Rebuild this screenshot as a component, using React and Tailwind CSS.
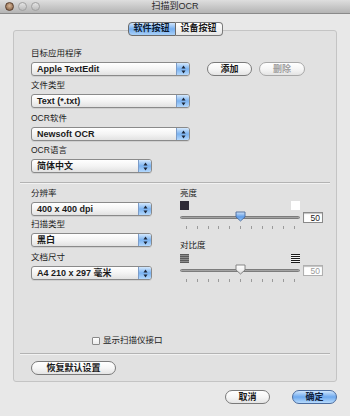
import React from 'react';

const font = "font-['Liberation_Sans','Noto_Sans_CJK_SC',sans-serif]";

function Arrows() {
  return (
    <svg width="5" height="9" viewBox="0 0 5 9">
      <path d="M2.5 0.5 L4.5 3.5 H0.5 Z" fill="#1c2536" />
      <path d="M2.5 8.5 L4.5 5.5 H0.5 Z" fill="#1c2536" />
    </svg>
  );
}

function Popup({ value, width }) {
  return (
    <div className={`flex h-[14px] ${width} rounded-[3px] border border-[#8a8a8a] bg-gradient-to-b from-white via-[#f4f4f4] to-[#e2e2e2] shadow-[0_1px_0_rgba(0,0,0,0.08)] overflow-hidden`}>
      <div className="flex-1 pl-[5px] text-[9px] font-bold leading-[12px] text-[#1a1a1a] whitespace-nowrap">{value}</div>
      <div className="w-[13px] flex items-center justify-center border-l border-[#7c9cc8] bg-gradient-to-b from-[#d4e8fc] via-[#7ab2f0] to-[#b4d8fc]">
        <Arrows />
      </div>
    </div>
  );
}

function Pill({ label, width, blue, disabled }) {
  const skin = blue
    ? 'border-[#4b6c9e] bg-gradient-to-b from-[#d0e6fc] via-[#6ea9ee] to-[#b6dafc] text-[#10203a]'
    : 'border-[#7a7a7a] bg-gradient-to-b from-white via-[#f6f6f6] to-[#e4e4e4]';
  return (
    <div className={`flex h-[14px] ${width} items-center justify-center rounded-full border ${skin} text-[9px] font-bold leading-none ${disabled ? 'text-[#a0a0a0] border-[#a8a8a8]' : 'text-[#1a1a1a]'}`}>
      {label}
    </div>
  );
}

function Label({ children, className = '' }) {
  return <div className={`h-[12px] text-[8.5px] leading-[12px] text-[#1a1a1a] ${className}`}>{children}</div>;
}

function Thumb({ blue }) {
  return (
    <svg width="11" height="11" viewBox="0 0 11 11">
      <defs>
        <linearGradient id={blue ? 'tb' : 'tw'} x1="0" y1="0" x2="0" y2="1">
          <stop offset="0" stopColor={blue ? '#cfe4fb' : '#ffffff'} />
          <stop offset="0.55" stopColor={blue ? '#5e9ce8' : '#f0f0f0'} />
          <stop offset="1" stopColor={blue ? '#9cc8f6' : '#d8d8d8'} />
        </linearGradient>
      </defs>
      <path d="M1 1 H10 V6 L5.5 10 L1 6 Z" fill={`url(#${blue ? 'tb' : 'tw'})`} stroke={blue ? '#4a6a9a' : '#7a7a7a'} strokeWidth="0.9" />
    </svg>
  );
}

function Slider({ blue, disabled }) {
  return (
    <div className="flex h-[12px] items-center">
      <div className="relative h-[12px] w-[120px]">
        <div className="absolute left-0 right-0 top-[5px] h-[3px] rounded-full bg-gradient-to-b from-[#8a8a8a] to-[#bdbdbd] border border-[#7c7c7c]" />
        <div className="absolute left-[55px] top-0">
          <Thumb blue={blue} />
        </div>
      </div>
      <div className={`ml-[3px] h-[11px] w-[20px] border bg-white pr-[2px] text-right text-[8.5px] leading-[10px] shadow-[inset_0_1px_1px_rgba(0,0,0,0.25)] ${disabled ? 'border-[#b0b0b0] text-[#9a9a9a]' : 'border-[#8a8a8a] text-[#1a1a1a]'}`}>
        50
      </div>
    </div>
  );
}

function Ticks() {
  return (
    <div className="mt-[3px] flex w-[120px] justify-between pl-[6px] pr-[5px]">
      {Array.from({ length: 11 }).map((_, i) => (
        <div key={i} className="h-[3px] w-px bg-[#9a9a9a]" />
      ))}
    </div>
  );
}

function Stripes({ strong }) {
  return (
    <svg width="9" height="9" viewBox="0 0 9 9">
      {[0, 2, 4, 6, 8].map((y) => (
        <rect key={y} x="0" y={y} width="9" height="1" fill={strong ? '#1a1a1a' : '#5a5a5a'} />
      ))}
      {[1, 3, 5, 7].map((y) => (
        <rect key={y} x="0" y={y} width="9" height="1" fill={strong ? '#f4f4f4' : '#8c8c8c'} />
      ))}
    </svg>
  );
}

function Separator() {
  return <div className="mx-[6px] h-[2px] border-t border-[#b3b3b3] border-b border-b-[#f2f2f2]" />;
}

export default function App() {
  return (
    <div className={`flex h-[416px] w-[350px] flex-col overflow-hidden bg-[#e8e8e8] ${font}`}>
      {/* title bar */}
      <div className="grid h-[14px] grid-cols-[1fr_auto_1fr] items-center border-b border-[#8a8a8a] bg-gradient-to-b from-[#dedede] to-[#b4b4b4]">
        <div className="flex items-center gap-[4px] pl-[5px]">
          <div className="h-[9px] w-[9px] rounded-full border border-[#5a4030] bg-[radial-gradient(circle_at_50%_40%,#d8b89a,#7a5438)]" />
          <div className="h-[9px] w-[9px] rounded-full border border-[#a0a0a0] bg-gradient-to-b from-[#e4e4e4] to-[#bcbcbc]" />
          <div className="h-[9px] w-[9px] rounded-full border border-[#a0a0a0] bg-gradient-to-b from-[#e4e4e4] to-[#bcbcbc]" />
        </div>
        <div className="text-[9px] leading-none text-[#2a2a2a]">扫描到OCR</div>
        <div />
      </div>

      {/* tabs */}
      <div className="relative z-10 mt-[8px] flex h-[14px] justify-center">
        <div className="flex h-[14px] w-[48px] items-center justify-center rounded-l-[4px] border border-[#6a6a6a] bg-gradient-to-b from-[#cfe4fb] via-[#74aef0] to-[#a9d0f8] text-[9px] font-bold text-[#0c1a30]">
          软件按钮
        </div>
        <div className="flex h-[14px] w-[47px] items-center justify-center rounded-r-[4px] border border-l-0 border-[#7a7a7a] bg-gradient-to-b from-white to-[#e6e6e6] text-[9px] font-bold text-[#1a1a1a]">
          设备按钮
        </div>
      </div>

      {/* group box */}
      <div className="mx-[13px] -mt-[6px] flex h-[352px] flex-col rounded-[3px] border border-[#c4c4c4] bg-[#e1e1e1]">
        <div className="pl-[17px] pt-[16px]">
          <Label>目标应用程序</Label>
          <div className="mt-[3px] flex items-center">
            <Popup value="Apple TextEdit" width="w-[159px]" />
            <div className="ml-[17px]"><Pill label="添加" width="w-[45px]" /></div>
            <div className="ml-[7px]"><Pill label="删除" width="w-[46px]" disabled /></div>
          </div>
          <Label className="mt-[3px]">文件类型</Label>
          <div className="mt-[3px]"><Popup value="Text (*.txt)" width="w-[159px]" /></div>
          <Label className="mt-[4px]">OCR软件</Label>
          <div className="mt-[3px]"><Popup value="Newsoft OCR" width="w-[159px]" /></div>
          <Label className="mt-[3px]">OCR语言</Label>
          <div className="mt-[3px]"><Popup value="简体中文" width="w-[121px]" /></div>
        </div>

        <div className="mt-[9px]"><Separator /></div>

        <div className="mt-[3px] flex pl-[17px]">
          <div className="w-[121px]">
            <Label>分辨率</Label>
            <div className="mt-[3px]"><Popup value="400 x 400 dpi" width="w-[121px]" /></div>
            <Label className="mt-[2px]">扫描类型</Label>
            <div className="mt-[3px]"><Popup value="黑白" width="w-[121px]" /></div>
            <Label className="mt-[4px]">文档尺寸</Label>
            <div className="mt-[3px]"><Popup value="A4 210 x 297 毫米" width="w-[121px]" /></div>
          </div>
          <div className="ml-[28px] w-[143px]">
            <Label>亮度</Label>
            <div className="mt-[2px] flex w-[120px] justify-between">
              <div className="h-[9px] w-[9px] bg-[#2e2a36]" />
              <div className="h-[9px] w-[9px] bg-white" />
            </div>
            <div className="mt-[1px]"><Slider blue /></div>
            <Ticks />
            <Label className="mt-[10px]">对比度</Label>
            <div className="mt-[3px] flex w-[120px] justify-between">
              <Stripes />
              <Stripes strong />
            </div>
            <div className="mt-[1px]"><Slider disabled /></div>
            <Ticks />
          </div>
        </div>

        <div className="ml-[78px] mt-[53px] flex h-[11px] items-center">
          <div className="h-[8px] w-[8px] rounded-[1px] border border-[#8a8a8a] bg-gradient-to-b from-white to-[#ececec]" />
          <div className="ml-[3px] text-[8.5px] leading-none text-[#1a1a1a]">显示扫描仪接口</div>
        </div>

        <div className="mt-[7px]"><Separator /></div>

        <div className="mt-[6px] pl-[17px]">
          <Pill label="恢复默认设置" width="w-[85px]" />
        </div>
      </div>

      {/* dialog buttons */}
      <div className="mt-[8px] flex justify-end gap-[22px] pr-[13px]">
        <Pill label="取消" width="w-[45px]" />
        <Pill label="确定" width="w-[45px]" blue />
      </div>
    </div>
  );
}
